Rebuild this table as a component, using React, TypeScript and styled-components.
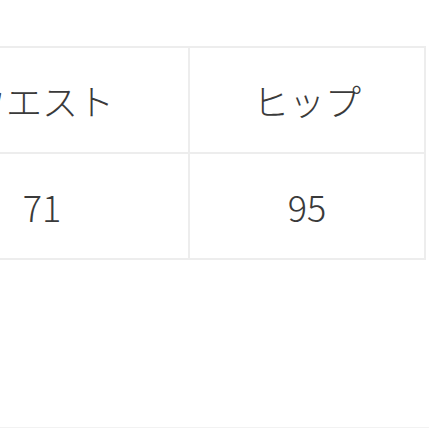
import styled, { createGlobalStyle } from 'styled-components';

const GlobalStyle = createGlobalStyle`
    html, body {
        margin: 0;
        padding: 0;
        background: #ffffff;
    }
    body {
        font-family: "Noto Sans CJK JP", "Noto Sans", sans-serif;
        color: #3a3a3a;
        overflow: hidden;
    }
`

const sizes = [
    { label: 'ウエスト', value: '71' },
    { label: 'ヒップ', value: '95' },
];

function App() {
    return (
        <>
            <GlobalStyle />
            <Page>
                <SizeTable>
                    <colgroup>
                        <col style={{ width: 294 }} />
                        <col style={{ width: 236 }} />
                    </colgroup>
                    <tbody>
                        <tr>
                            {sizes.map((s) => (
                                <Cell key={s.label}>{s.label}</Cell>
                            ))}
                        </tr>
                        <tr>
                            {sizes.map((s) => (
                                <Cell key={s.label}>{s.value}</Cell>
                            ))}
                        </tr>
                    </tbody>
                </SizeTable>
                <Divider />
            </Page>
        </>
    );
}

const Page = styled.div`
    width: 429px;
    height: 429px;
    overflow: hidden;
    display: flex;
    flex-direction: column;
    padding-top: 46px;
    box-sizing: border-box;
`

const SizeTable = styled.table`
    border-collapse: collapse;
    table-layout: fixed;
    width: 530px;
    margin-left: -106px;
`

const Cell = styled.td`
    height: 104px;
    padding: 0;
    border: 2px solid #ededed;
    text-align: center;
    vertical-align: middle;
    font-size: 36px;
    font-weight: 300;
    line-height: 1;
    color: #3a3a3a;
`

const Divider = styled.div`
    margin-top: auto;
    margin-bottom: 1px;
    height: 1px;
    background: #f2f2f2;
`

export default App;
